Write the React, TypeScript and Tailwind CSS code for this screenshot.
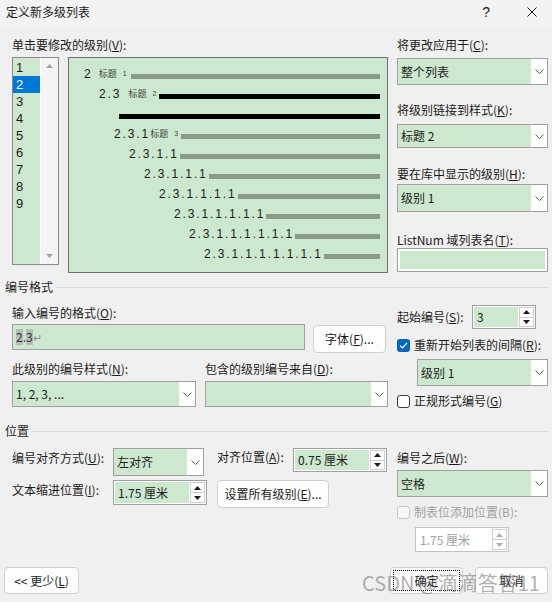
import React from "react";

const GREEN = "bg-[#cce8cf]";

function Chevron() {
  return (
    <svg width="9" height="5" viewBox="0 0 9 5" className="block">
      <path d="M0.5 0.5 L4.5 4.5 L8.5 0.5" fill="none" stroke="#5f5f5f" strokeWidth="1" />
    </svg>
  );
}

function Tri({ up, color = "#1a1a1a" }: { up?: boolean; color?: string }) {
  return (
    <svg width="7" height="4" viewBox="0 0 7 4" className="block">
      <path d={up ? "M0 4 L3.5 0 L7 4 Z" : "M0 0 L3.5 4 L7 0 Z"} fill={color} />
    </svg>
  );
}

function Combo({ text, className = "" }: { text: string; className?: string }) {
  return (
    <div className={`flex border border-[#a0a0a0] ${className}`}>
      <div className={`flex-1 flex items-center pl-[3px] ${GREEN} whitespace-nowrap`}>{text}</div>
      <div className="w-[16px] bg-white flex items-center justify-center">
        <Chevron />
      </div>
    </div>
  );
}

function Spin({ text, className = "", disabled }: { text: string; className?: string; disabled?: boolean }) {
  const arrow = disabled ? "#b0b0b0" : "#1a1a1a";
  return (
    <div className={`flex border ${disabled ? "border-[#c4c4c4]" : "border-[#a0a0a0]"} bg-white p-[1px] ${className}`}>
      <div
        className={`flex-1 flex items-center pl-[3px] whitespace-nowrap ${
          disabled ? "bg-white text-[#a0a0a0]" : GREEN
        }`}
      >
        {text}
      </div>
      <div className="w-[15px] ml-[1px] flex flex-col">
        <div className="flex-1 border border-[#cfcfcf] flex items-center justify-center bg-white">
          <Tri up color={arrow} />
        </div>
        <div className="flex-1 border border-t-0 border-[#cfcfcf] flex items-center justify-center bg-white">
          <Tri color={arrow} />
        </div>
      </div>
    </div>
  );
}

function Check({ checked, disabled }: { checked?: boolean; disabled?: boolean }) {
  if (checked) {
    return (
      <div className="w-[13px] h-[13px] rounded-[3px] bg-[#0067c0] flex items-center justify-center shrink-0">
        <svg width="9" height="7" viewBox="0 0 9 7">
          <path d="M1 3.6 L3.4 6 L8 1" fill="none" stroke="white" strokeWidth="1.2" />
        </svg>
      </div>
    );
  }
  return (
    <div
      className={`w-[13px] h-[13px] rounded-[3px] border shrink-0 ${
        disabled ? "border-[#c6c6c6] bg-[#f7f7f7]" : "border-[#3a3a3a] bg-white"
      }`}
    />
  );
}

function Btn({ children, className = "" }: { children: React.ReactNode; className?: string }) {
  return (
    <div
      className={`flex items-center justify-center bg-[#fdfdfd] border border-[#d0d0d0] rounded-[4px] whitespace-nowrap ${className}`}
    >
      {children}
    </div>
  );
}

function SectionHeader({ title, className = "" }: { title: string; className?: string }) {
  return (
    <div className={`flex items-center pl-[5px] pr-[4px] ${className}`}>
      <span>{title}</span>
      <div className="flex-1 h-px bg-[#dadada] ml-[3px]" />
    </div>
  );
}

// numbers in the preview sit in equal-width cells, like half-width SimSun
function Num({ text }: { text: string }) {
  return (
    <span className="flex font-['Liberation_Sans',sans-serif] text-[12px] leading-[14px] text-[#1a1a1a]">
      {text.split("").map((c, i) => (
        <span key={i} className="w-[6.9px] text-center">
          {c}
        </span>
      ))}
    </span>
  );
}

const rows = [
  { pad: "pl-[15px]", num: "2", tag: "1", tagMl: "ml-[8px]", barMl: "ml-[4px]", black: false },
  { pad: "pl-[30px]", num: "2.3", tag: "2", tagMl: "ml-[9px]", barMl: "ml-[3px]", black: true },
  { pad: "pl-[50px]", num: "", tag: "", tagMl: "", barMl: "", black: true },
  { pad: "pl-[45px]", num: "2.3.1", tag: "3", tagMl: "ml-[2px]", barMl: "ml-[3px]", black: false },
  { pad: "pl-[60px]", num: "2.3.1.1", tag: "", tagMl: "", barMl: "ml-[3px]", black: false },
  { pad: "pl-[75px]", num: "2.3.1.1.1", tag: "", tagMl: "", barMl: "ml-[3px]", black: false },
  { pad: "pl-[90px]", num: "2.3.1.1.1.1", tag: "", tagMl: "", barMl: "ml-[3px]", black: false },
  { pad: "pl-[105px]", num: "2.3.1.1.1.1.1", tag: "", tagMl: "", barMl: "ml-[3px]", black: false },
  { pad: "pl-[120px]", num: "2.3.1.1.1.1.1.1", tag: "", tagMl: "", barMl: "ml-[3px]", black: false },
  { pad: "pl-[135px]", num: "2.3.1.1.1.1.1.1.1", tag: "", tagMl: "", barMl: "ml-[3px]", black: false },
];

function Preview() {
  return (
    <div className={`w-[321px] h-[216px] border border-[#707070] ${GREEN} pt-[6px] pr-[7px]`}>
      {rows.map((r, i) => (
        <div key={i} className={`flex items-center h-[20px] ${r.pad}`}>
          {r.num && <Num text={r.num} />}
          {r.tag && (
            <span className={`flex items-center whitespace-nowrap text-[#3d463d] ${r.tagMl}`}>
              <span className="text-[9px] leading-[12px]">标题</span>
              <span className="ml-[6px] text-[7px] leading-[10px] font-['Liberation_Sans',sans-serif]">{r.tag}</span>
            </span>
          )}
          <div className={`flex-1 h-[5px] mt-[5px] ${r.barMl} ${r.black ? "bg-black" : "bg-[#8a9b8a]"}`} />
        </div>
      ))}
    </div>
  );
}

function LevelList() {
  return (
    <div className="w-[47px] h-[208px] border border-[#8a8a8a] flex">
      <div className={`w-[27px] ${GREEN} pt-[1px]`}>
        {[1, 2, 3, 4, 5, 6, 7, 8, 9].map((n) => (
          <div
            key={n}
            className={`h-[17px] leading-[17px] pl-[3px] text-[13px] font-['Liberation_Sans',sans-serif] ${
              n === 2 ? "bg-[#0078d7] text-white" : ""
            }`}
          >
            {n}
          </div>
        ))}
      </div>
      <div className="w-px bg-white" />
      <div className="flex-1 bg-[#f4f4f4] flex flex-col items-center justify-between pt-[6px] pb-[6px]">
        <Tri up color="#a3a3a3" />
        <Tri color="#a3a3a3" />
      </div>
    </div>
  );
}

export default function App() {
  return (
    <div className="relative w-[552px] h-[602px] overflow-hidden bg-[#f0f0f0] text-[12px] leading-[16px] text-[#1b1b1b] font-['Noto_Sans_CJK_SC',sans-serif]">
      {/* title bar */}
      <div className="h-[27px] bg-[#f3f3f3] flex items-center pl-[6px] pb-[3px]">
        <span className="flex-1">定义新多级列表</span>
        <span className="text-[14px] font-['Liberation_Sans',sans-serif]">?</span>
        <svg width="10" height="10" viewBox="0 0 10 10" className="ml-[37px] mr-[15px]">
          <path d="M0.5 0.5 L9.5 9.5 M9.5 0.5 L0.5 9.5" stroke="#1a1a1a" strokeWidth="1" />
        </svg>
      </div>

      {/* level + preview */}
      <div className="flex pl-[12px] pt-[10px]">
        <div className="w-[376px]">
          <div>
            单击要修改的级别(<u>V</u>):
          </div>
          <div className="flex mt-[4px] gap-[9px]">
            <LevelList />
            <Preview />
          </div>
        </div>
        <div className="ml-[9px] w-[151px]">
          <div>
            将更改应用于(<u>C</u>):
          </div>
          <Combo className="mt-[5px] h-[27px]" text="整个列表" />
          <div className="mt-[17px]">
            将级别链接到样式(<u>K</u>):
          </div>
          <Combo className="mt-[6px] h-[24px] border-[#6a6a6a]" text="标题 2" />
          <div className="mt-[18px]">
            要在库中显示的级别(<u>H</u>):
          </div>
          <Combo className="mt-[2px] h-[28px]" text="级别 1" />
          <div className="mt-[20px]">
            ListNum 域列表名(<u>T</u>):
          </div>
          <div className="h-[24px] border border-[#a0a0a0] bg-white p-[2px]">
            <div className={`h-full ${GREEN}`} />
          </div>
        </div>
      </div>

      {/* 编号格式 */}
      <SectionHeader title="编号格式" className="mt-[6px]" />
      <div className="flex pl-[12px]">
        <div className="w-[376px]">
          <div className="mt-[10px]">
            输入编号的格式(<u>O</u>):
          </div>
          <div className="flex items-start mt-[3px]">
            <div className={`w-[293px] h-[26px] border border-[#a0a0a0] ${GREEN} flex items-center pl-[3px] text-[#333]`}>
              <span className="bg-[#b6bdb6]">2</span>
              <span>.</span>
              <span className="bg-[#b6bdb6]">3</span>
              <span className="text-[#8f8f8f] text-[11px]">↵</span>
            </div>
            <Btn className="ml-[8px] mt-[1px] w-[73px] h-[28px]">
              字体(<u>F</u>)...
            </Btn>
          </div>
          <div className="flex mt-[8px]">
            <div className="w-[193px]">
              此级别的编号样式(<u>N</u>):
            </div>
            <div>
              包含的级别编号来自(<u>D</u>):
            </div>
          </div>
          <div className="flex mt-[4px] gap-[9px]">
            <Combo className="w-[184px] h-[26px]" text="1, 2, 3, ..." />
            <Combo className="w-[183px] h-[26px]" text="" />
          </div>
        </div>
        <div className="ml-[9px] w-[151px]">
          <div className="flex items-center mt-[10px]">
            <span className="w-[75px]">
              起始编号(<u>S</u>):
            </span>
            <Spin className="w-[64px] h-[24px]" text="3" />
          </div>
          <div className="flex items-center mt-[8px] h-[16px]">
            <Check checked />
            <span className="ml-[4px] whitespace-nowrap">
              重新开始列表的间隔(<u>R</u>):
            </span>
          </div>
          <Combo className="ml-[20px] mt-[6px] w-[131px] h-[27px]" text="级别 1" />
          <div className="flex items-center mt-[7px] h-[16px]">
            <Check />
            <span className="ml-[4px]">
              正规形式编号(<u>G</u>)
            </span>
          </div>
        </div>
      </div>

      {/* 位置 */}
      <SectionHeader title="位置" className="mt-[14px]" />
      <div className="flex pl-[12px] mt-[9px]">
        <div className="w-[195px]">
          <div className="flex items-start">
            <span className="w-[101px] mt-[2px]">
              编号对齐方式(<u>U</u>):
            </span>
            <Combo className="w-[91px] h-[28px]" text="左对齐" />
          </div>
          <div className="flex items-start mt-[4px]">
            <span className="w-[101px] mt-[2px]">
              文本缩进位置(<u>I</u>):
            </span>
            <Spin className="w-[94px] h-[25px]" text="1.75 厘米" />
          </div>
        </div>
        <div className="ml-[10px] w-[171px]">
          <div className="flex items-start">
            <span className="w-[76px] mt-[1px]">
              对齐位置(<u>A</u>):
            </span>
            <Spin className="w-[94px] h-[24px]" text="0.75 厘米" />
          </div>
          <Btn className="mt-[8px] w-[112px] h-[28px]">
            设置所有级别(<u>E</u>)...
          </Btn>
        </div>
        <div className="ml-[9px] w-[151px]">
          <div className="mt-[2px]">
            编号之后(<u>W</u>):
          </div>
          <Combo className="mt-[4px] h-[27px]" text="空格" />
          <div className="flex items-center mt-[7px] h-[16px]">
            <Check disabled />
            <span className="ml-[4px] text-[#a0a0a0]">制表位添加位置(B):</span>
          </div>
          <Spin disabled className="ml-[18px] mt-[7px] w-[94px] h-[25px]" text="1.75 厘米" />
        </div>
      </div>

      {/* bottom buttons */}
      <div className="flex justify-between px-[4px] mt-[15px]">
        <Btn className="w-[75px] h-[27px]">
          &lt;&lt; 更少(<u>L</u>)
        </Btn>
        <div className="flex gap-[12px]">
          <Btn className="relative w-[73px] h-[27px] border-[#0067c0]">
            <div className="absolute inset-[2px] border border-dotted border-black rounded-[1px]" />
            确定
          </Btn>
          <Btn className="w-[73px] h-[27px]">取消</Btn>
        </div>
      </div>

      {/* watermark */}
      <div className="absolute left-[362px] top-[571px] text-[20px] leading-[24px] text-[rgba(110,110,110,0.55)] whitespace-nowrap pointer-events-none">
        CSDN @滴滴答答11
      </div>
    </div>
  );
}
